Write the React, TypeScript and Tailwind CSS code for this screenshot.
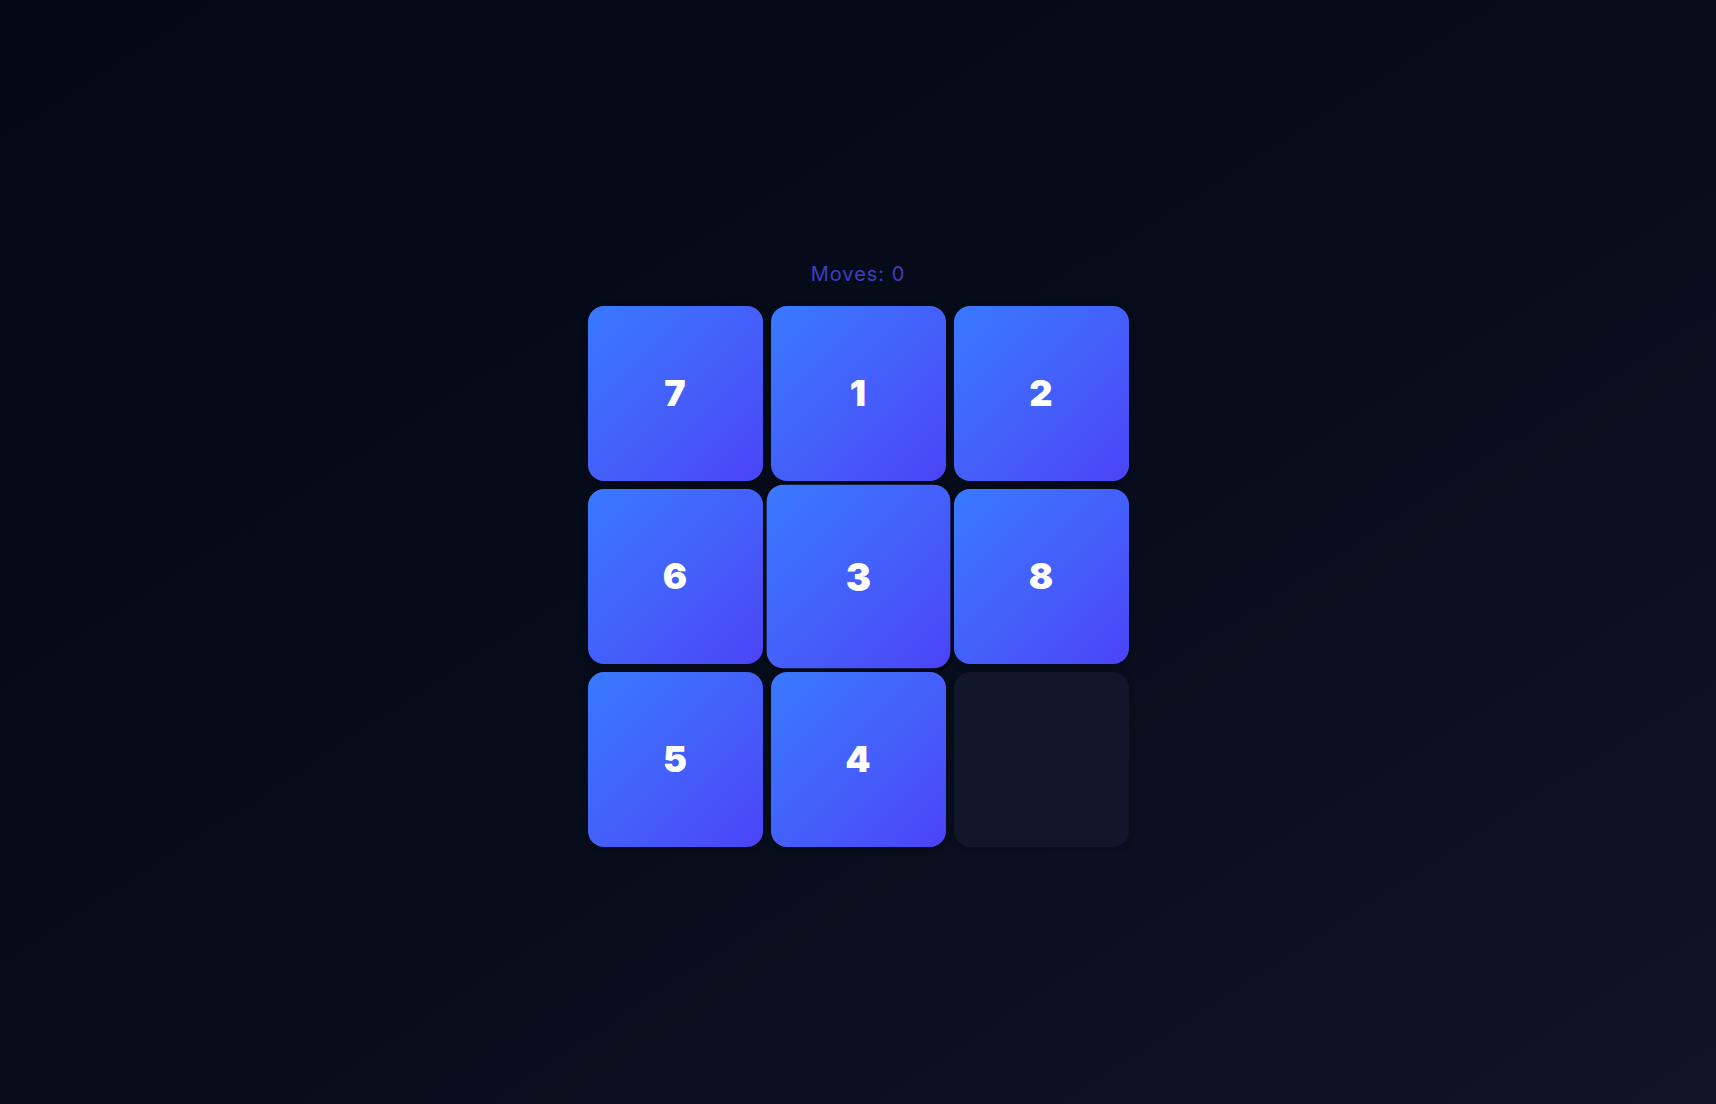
import { useState } from 'react'

const START = [7, 1, 2, 6, 3, 8, 5, 4, 0]

function Tile({ value, active }: { value: number; active: boolean }) {
  if (value === 0) {
    return <div className="h-[175px] w-[175px] rounded-2xl bg-[#10172a] shadow-[0_0_6px_rgba(0,0,0,0.25)]" />
  }
  return (
    <button
      className={
        'flex h-[175px] w-[175px] items-center justify-center rounded-2xl bg-gradient-to-br from-[#3879ff] to-[#4b43f6] text-4xl font-black text-white ' +
        (active ? 'scale-105 shadow-[0_0_0_3px_rgba(5,8,16,0.85)]' : 'shadow-[0_2px_6px_rgba(0,0,0,0.25)]')
      }
    >
      {value}
    </button>
  )
}

export default function App() {
  const [tiles] = useState(START)
  const [moves] = useState(0)

  return (
    <div
      className="flex min-h-screen w-full flex-col items-center justify-center bg-gradient-to-br from-[#040816] via-[#070c1a] to-[#0e1526]"
      style={{ fontFamily: 'Inter, "Noto Sans", sans-serif' }}
    >
      <div className="flex flex-col items-center pt-0.5">
        <p className="mb-[18px] text-xl leading-7 tracking-wider text-[#3b3fc4]">Moves: {moves}</p>
        <div className="grid grid-cols-[repeat(3,175px)] gap-2">
          {tiles.map((v, i) => (
            <Tile key={i} value={v} active={v === 3} />
          ))}
        </div>
      </div>
    </div>
  )
}
